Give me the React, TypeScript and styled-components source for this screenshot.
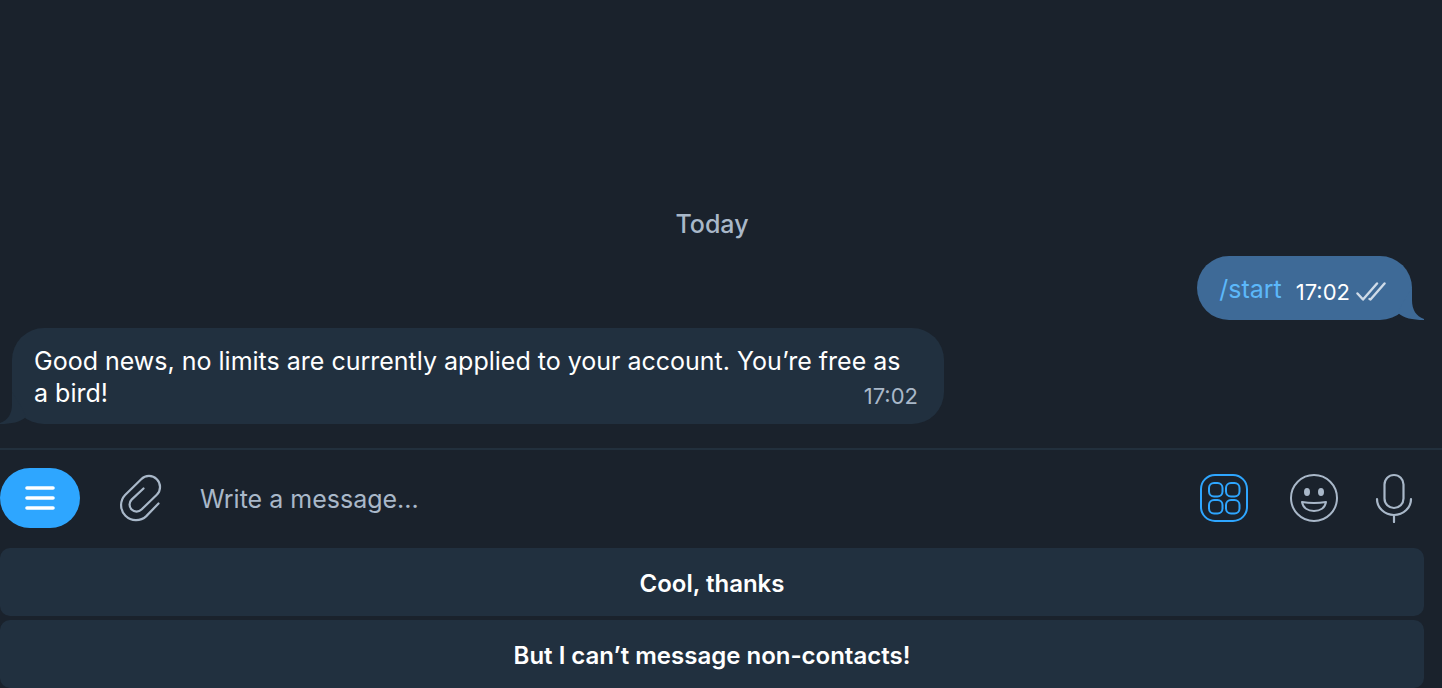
import React from "react";
import styled, { createGlobalStyle } from "styled-components";

const color = {
  page: "#1a222c",
  panel: "#21303f",
  outgoing: "#3e6a97",
  accent: "#2ea6ff",
  link: "#5cb8fa",
  muted: "#a9b8c9",
  line: "#22303d",
  text: "#ffffff",
};

const GlobalStyle = createGlobalStyle`
  * { box-sizing: border-box; }
  body {
    margin: 0;
    background: ${color.page};
    color: ${color.text};
    font-family: Inter, "Liberation Sans", sans-serif;
    font-size: 25px;
    line-height: 32px;
  }
`;

const Page = styled.div`
  min-height: 100vh;
  display: flex;
  flex-direction: column;
`;

const History = styled.main`
  flex: 1;
  display: flex;
  flex-direction: column;
  justify-content: flex-end;
  gap: 8px;
  padding: 0 30px 24px 12px;
`;

const DateLabel = styled.div`
  align-self: center;
  margin-bottom: 8px;
  color: ${color.muted};
  font-weight: 500;
`;

const Bubble = styled.article<{ $outgoing?: boolean }>`
  position: relative;
  display: flex;
  align-items: flex-end;
  align-self: ${(p) => (p.$outgoing ? "flex-end" : "flex-start")};
  gap: 14px;
  max-width: 932px;
  padding: 17px 26px 15px 22px;
  border-radius: 32px;
  background: ${(p) => (p.$outgoing ? color.outgoing : color.panel)};
`;

const Tail = styled.svg<{ $outgoing?: boolean }>`
  position: absolute;
  bottom: 0;
  ${(p) => (p.$outgoing ? "right: -12px;" : "left: -12px; transform: scaleX(-1);")}
  fill: ${(p) => (p.$outgoing ? color.outgoing : color.panel)};
`;

const MessageText = styled.p`
  margin: 0;
`;

const Command = styled.a`
  color: ${color.link};
  text-decoration: none;
`;

const Meta = styled.span<{ $outgoing?: boolean }>`
  display: flex;
  align-items: center;
  gap: 6px;
  font-size: 22px;
  line-height: 26px;
  color: ${(p) => (p.$outgoing ? color.text : color.muted)};
`;

const FloatingMeta = styled(Meta)`
  float: right;
  margin-top: 6px;
`;

const Composer = styled.form`
  display: flex;
  align-items: center;
  height: 100px;
  padding: 0 28px 2px 0;
  border-top: 2px solid ${color.line};
`;

const IconButton = styled.button`
  flex: none;
  display: flex;
  padding: 0;
  border: 0;
  background: none;
  color: ${color.muted};
  cursor: pointer;
`;

const MenuButton = styled(IconButton)`
  align-items: center;
  justify-content: center;
  width: 80px;
  height: 60px;
  border-radius: 30px;
  background: ${color.accent};
  color: ${color.text};
`;

const AttachButton = styled(IconButton)`
  margin: 0 38px;
`;

const KeyboardButton = styled(IconButton)`
  color: ${color.accent};
`;

const Actions = styled.div`
  display: flex;
  align-items: center;
  gap: 36px;
`;

const Field = styled.input`
  flex: 1;
  min-width: 0;
  height: 60px;
  padding: 2px 0 0;
  border: 0;
  outline: 0;
  background: none;
  color: ${color.text};
  font: inherit;
  &::placeholder {
    color: ${color.muted};
    opacity: 1;
  }
`;

const ReplyKeyboard = styled.div`
  display: flex;
  flex-direction: column;
  gap: 4px;
  padding-right: 18px;
`;

const ReplyButton = styled.button`
  height: 68px;
  padding: 4px 0 0;
  border: 0;
  border-radius: 10px;
  background: ${color.panel};
  color: ${color.text};
  font: inherit;
  font-size: 24px;
  font-weight: 600;
  cursor: pointer;
`;

const BubbleTail = ({ outgoing }: { outgoing?: boolean }) => (
  <Tail $outgoing={outgoing} width="26" height="32" viewBox="0 0 26 32" aria-hidden="true">
    <path d="M14 0V12C14 22 18 28 26 31V32C14 32 6 30 0 25L4 16Z" />
  </Tail>
);

const ReadTicks = () => (
  <svg width="30" height="20" viewBox="0 0 30 20" fill="none" stroke="#cfdbe8" strokeWidth="2.4" strokeLinecap="round" strokeLinejoin="round" role="img" aria-label="Read">
    <path d="M1.500 11.500L7 17.500L21 1.500M13.500 17L14.500 17.500L28.500 1.500" />
  </svg>
);

const MenuIcon = () => (
  <svg width="30" height="26" viewBox="0 0 30 26" stroke="currentColor" strokeWidth="3.600" strokeLinecap="round" aria-hidden="true">
    <path d="M2 3H28M2 13H28M2 23H28" />
  </svg>
);

const ClipIcon = () => (
  <svg width="44" height="50" viewBox="118 473 44 50" fill="none" stroke="currentColor" strokeWidth="2.200" strokeLinecap="round" aria-hidden="true">
    <path d="M143.500 488.500L131.600 499.600A7 7 0 0 0 141.500 509.500L156.800 494.800A11 11 0 0 0 141.200 479.200L125.100 494.900A15 15 0 0 0 146.300 516.100L158.500 503.500" />
  </svg>
);

const KeyboardIcon = () => (
  <svg width="48" height="48" viewBox="0 0 48 48" fill="none" stroke="currentColor" strokeWidth="2" aria-hidden="true">
    <rect x="1" y="1" width="46" height="46" rx="14" />
    <rect x="9" y="9" width="13.500" height="13.500" rx="5" />
    <rect x="26" y="9" width="13.500" height="13.500" rx="5" />
    <rect x="9" y="26" width="13.500" height="13.500" rx="5" />
    <rect x="26" y="26" width="13.500" height="13.500" rx="5" />
  </svg>
);

const SmileIcon = () => (
  <svg width="54" height="48" viewBox="-6 0 54 48" fill="none" stroke="currentColor" strokeWidth="2" strokeLinejoin="round" aria-hidden="true">
    <circle cx="24" cy="24" r="23" />
    <ellipse cx="17" cy="18" rx="3" ry="4" fill="currentColor" stroke="none" />
    <ellipse cx="31" cy="18" rx="3" ry="4" fill="currentColor" stroke="none" />
    <path d="M12 28Q24 30 36 28C35 34 30 37 24 37S13 34 12 28Z" />
  </svg>
);

const MicIcon = () => (
  <svg width="40" height="50" viewBox="0 0 40 50" fill="none" stroke="currentColor" strokeWidth="2.200" strokeLinecap="round" aria-hidden="true">
    <rect x="10.500" y="2" width="19" height="33" rx="9.500" />
    <path d="M3 26A17 16 0 0 0 37 26M20 42V49" />
  </svg>
);

export default function App() {
  return (
    <Page>
      <GlobalStyle />
      <History>
        <DateLabel>Today</DateLabel>
        <Bubble $outgoing>
          <Command href="#start">/start</Command>
          <Meta $outgoing>
            <time>17:02</time>
            <ReadTicks />
          </Meta>
          <BubbleTail outgoing />
        </Bubble>
        <Bubble>
          <MessageText>
            Good news, no limits are currently applied to your account. You’re free as a bird!
            <FloatingMeta>
              <time>17:02</time>
            </FloatingMeta>
          </MessageText>
          <BubbleTail />
        </Bubble>
      </History>
      <Composer onSubmit={(e) => e.preventDefault()}>
        <MenuButton type="button" aria-label="Menu">
          <MenuIcon />
        </MenuButton>
        <AttachButton type="button" aria-label="Attach a file">
          <ClipIcon />
        </AttachButton>
        <Field type="text" aria-label="Message" placeholder="Write a message..." />
        <Actions>
          <KeyboardButton type="button" aria-label="Bot keyboard">
            <KeyboardIcon />
          </KeyboardButton>
          <IconButton type="button" aria-label="Emoji">
            <SmileIcon />
          </IconButton>
          <IconButton type="button" aria-label="Record voice message">
            <MicIcon />
          </IconButton>
        </Actions>
      </Composer>
      <ReplyKeyboard>
        <ReplyButton type="button">Cool, thanks</ReplyButton>
        <ReplyButton type="button">But I can’t message non-contacts!</ReplyButton>
      </ReplyKeyboard>
    </Page>
  );
}
